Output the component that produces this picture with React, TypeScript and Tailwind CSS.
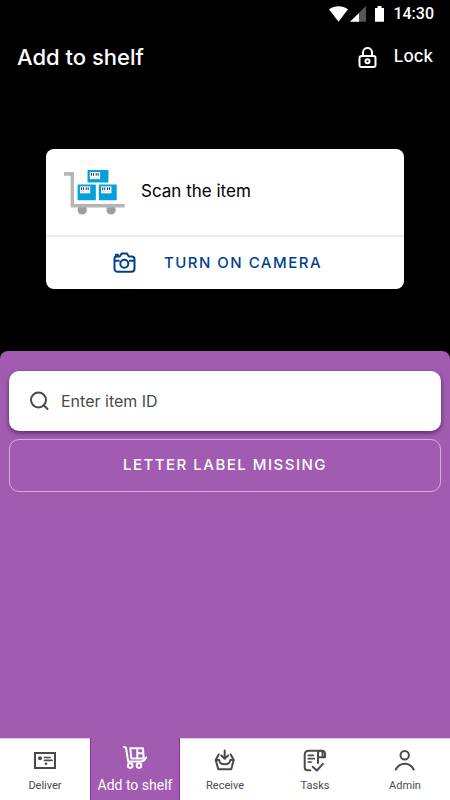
import { useState } from "react";
import type { ReactNode } from "react";

type Tab = { label: string; icon: ReactNode };

const stroke = {
  fill: "none",
  stroke: "currentColor",
  strokeWidth: 2,
  strokeLinecap: "round",
  strokeLinejoin: "round",
} as const;

function Icon({ children }: { children: ReactNode }) {
  return (
    <svg className="size-6 shrink-0" viewBox="0 0 24 24" aria-hidden="true" {...stroke}>
      {children}
    </svg>
  );
}

const tabs: Tab[] = [
  {
    label: "Deliver",
    icon: (
      <Icon>
        <path d="M2 4h20v15H2z" strokeLinejoin="miter" />
        <circle cx="7" cy="9.3" r="2" fill="currentColor" stroke="none" />
        <path d="M11.5 8.5h5.5M11.5 11.3h7.5" strokeWidth="1.7" />
        <circle cx="13" cy="14.7" r="1.3" fill="currentColor" stroke="none" />
      </Icon>
    ),
  },
  {
    label: "Add to shelf",
    icon: (
      <Icon>
        <path d="M1 2l2 .6 2.2 13.9h12.6c2.2 0 4-1.3 5.2-4" />
        <path d="M7.3 3.2H20l.7 10.3H8.3zM14.3 3.5v9.8M14.5 8.3h5.7" />
        <circle cx="7.2" cy="20.6" r="2.3" />
        <circle cx="16" cy="20.6" r="2.3" />
      </Icon>
    ),
  },
  {
    label: "Receive",
    icon: (
      <Icon>
        <path d="M11.7 1.5v8M8.3 6.5l3.4 3.3 3.4-3.3" />
        <path d="M5.7 5.5L2.7 11l2.6 9.3h12.9L20.7 11l-3-5.5" />
        <path d="M2.9 11h3.2c.3 3 2.2 4.2 5.6 4.2s5.3-1.2 5.6-4.2h3.2" />
      </Icon>
    ),
  },
  {
    label: "Tasks",
    icon: (
      <Icon>
        <path d="M7.3 21.3H4.5c-1.8 0-2.8-1-2.8-2.7V6c0-2.7 1.6-4.2 4.3-4.2h12.8c2 0 3.2 1 3.2 3v3.5h-5.8" />
        <path d="M15 14V4.8c0-2 .9-3 2.4-3s2.2 1 2.2 2.7v3.3" />
        <path d="M5.3 6.3h5M5.3 9.7h6M5.3 13h3" strokeWidth="1.7" />
        <path d="M9.7 17.7l4.2 3.8 6-6.7" />
      </Icon>
    ),
  },
  {
    label: "Admin",
    icon: (
      <Icon>
        <circle cx="11.7" cy="6.3" r="4.2" />
        <path d="M2.7 20.5C5 16.5 8 14.7 11.8 14.7s6.700 1.800 9 5.800" />
      </Icon>
    ),
  },
];

function StatusBar() {
  return (
    <div className="flex h-7 items-center justify-end pr-4">
      <svg width="56" height="16" viewBox="0 0 56 16" aria-hidden="true">
        <path d="M0 3.2C5.5-.9 13.5-.9 19 3.2L9.5 15.7z" fill="#fff" />
        <path d="M21 15.7L37 0v15.7z" fill="#555" />
        <path d="M21 15.7L30 6.9v8.8z" fill="#fff" />
        <path d="M46 2h2.5V0h4v2H55v13.7h-9z" fill="#fff" />
      </svg>
      <span className="ml-2 font-[Roboto,sans-serif] text-base font-medium">14:30</span>
    </div>
  );
}

const boxes = [
  { x: 83, y: 18, w: 63, h: 37 },
  { x: 53, y: 61, w: 55, h: 48 },
  { x: 117, y: 61, w: 54, h: 48 },
];

function Trolley() {
  return (
    <svg width="61" height="45" viewBox="12 18 184 135" className="shrink-0" aria-hidden="true">
      <circle cx="67" cy="138" r="14" fill="#9e9e9e" />
      <circle cx="154" cy="138" r="14" fill="#9e9e9e" />
      <path d="M12 24h30v96h153v11H32V35H12z" fill="#b5b5b5" />
      {boxes.map(({ x, y, w, h }) => (
        <g key={x}>
          <rect x={x} y={y} width={w} height={h} rx="2" fill="#04a0dc" />
          <rect x={x + 7} y={y + 6} width="31" height="21" fill="#fff" />
          <path
            d={`M${x + 12} ${y + 9}v8M${x + 18} ${y + 9}v8M${x + 26} ${y + 9}v8M${x + 32} ${y + 9}v8`}
            stroke="#1b2463"
            strokeWidth="3"
          />
          <path d={`M${x + 9} ${y + 22}h26`} stroke="#d5d5dd" strokeWidth="2" />
        </g>
      ))}
    </svg>
  );
}

export default function App() {
  const [active, setActive] = useState("Add to shelf");
  const [itemId, setItemId] = useState("");

  return (
    <div className="flex min-h-screen flex-col bg-black font-[Inter,sans-serif] text-white">
      <StatusBar />
      <header className="flex h-[58px] items-center justify-between px-[17px]">
        <h1 className="text-[22px] font-medium">Add to shelf</h1>
        <button type="button" className="flex items-center gap-3.5 text-[17px] font-medium">
          <Icon>
            <rect x="3.5" y="11" width="16" height="11" rx="2" />
            <path d="M7 10.8V7.5c0-6 9-6 9 0v3.300" />
            <circle cx="11.5" cy="16.3" r="2" />
          </Icon>
          Lock
        </button>
      </header>

      <section className="mx-[46px] mt-[63px] mb-[62px] overflow-hidden rounded-lg bg-white text-black">
        <div className="flex h-[86px] items-center gap-4 px-[18px]">
          <Trolley />
          <p className="text-[17px]">Scan the item</p>
        </div>
        <button
          type="button"
          className="flex h-[54px] w-full items-center justify-center gap-7 border-t-2 border-[#ebebeb] pr-4 text-[15px] font-medium tracking-widest text-[#00428a]"
        >
          <Icon>
            <path d="M2.5 9.7V7.5c0-1.2.7-2 2-2h3.2l2.1-3.1h4.9l2.1 3.1h3c1.6 0 2.7 1 2.7 2.7v9.3c0 2-1.2 3.3-3.2 3.3H5.7c-2 0-3.2-1.3-3.2-3.3V9.7h4.3M17.7 9.7h4.6M3.7 3.8h2.2" />
            <circle cx="12.3" cy="12.7" r="4" />
          </Icon>
          TURN ON CAMERA
        </button>
      </section>

      <main className="flex flex-1 flex-col gap-2 rounded-t-lg bg-[#a15cb2] px-[9px] pt-5">
        <label className="flex h-[60px] items-center gap-3 rounded-[10px] bg-white pr-4 pl-5 text-[#4a4a4a] shadow-[0_2px_5px_rgba(50,0,60,0.6)]">
          <svg className="size-5 shrink-0" viewBox="0 0 20 20" aria-hidden="true" {...stroke}>
            <circle cx="9.5" cy="9" r="7.5" />
            <path d="M14.8 14.3l3.7 3.7" />
          </svg>
          <input
            type="text"
            aria-label="Enter item ID"
            placeholder="Enter item ID"
            value={itemId}
            onChange={(e) => setItemId(e.target.value)}
            className="w-full min-w-0 bg-transparent text-base outline-none placeholder:text-[#4a4a4a]"
          />
        </label>
        <button
          type="button"
          className="h-[53px] rounded-[10px] border border-[#d3aedc] text-[15px] font-medium tracking-widest"
        >
          LETTER LABEL MISSING
        </button>
      </main>

      <nav className="grid h-[62px] grid-cols-5 bg-[#a15cb2] font-[Roboto,sans-serif]">
        {tabs.map(({ label, icon }) => (
          <button
            key={label}
            type="button"
            aria-current={active === label ? "page" : undefined}
            onClick={() => setActive(label)}
            className={
              active === label
                ? "flex flex-col items-center gap-1.5 border-x border-[#8f2fa3] pt-[7px] text-sm whitespace-nowrap text-white"
                : "flex flex-col items-center gap-[5px] border-t border-[#e0c8e6] bg-white pt-2.5 text-[11px] text-[#4a4a4a]"
            }
          >
            {icon}
            <span>{label}</span>
          </button>
        ))}
      </nav>
    </div>
  );
}
